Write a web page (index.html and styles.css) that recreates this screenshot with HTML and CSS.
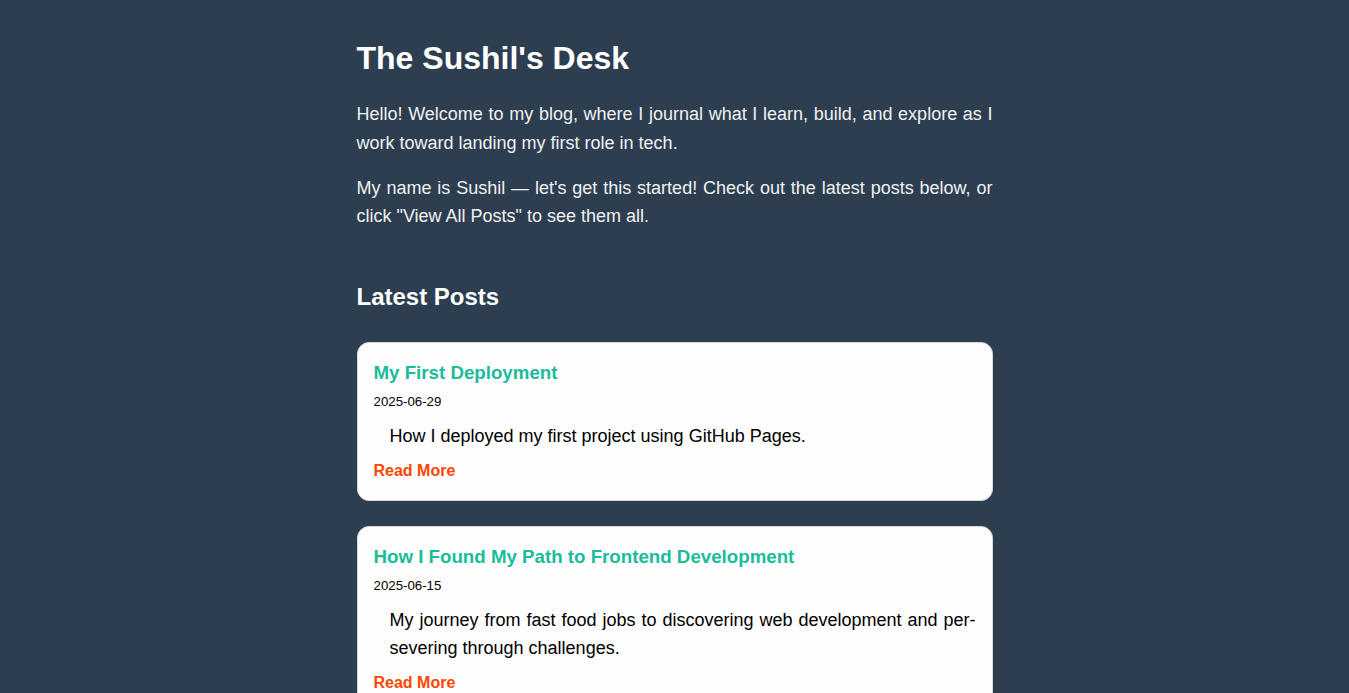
FILE: index.html
```html
<!DOCTYPE html>
<html lang="en">
<head>
<meta charset="utf-8">
<title>The Sushil's Desk</title>
<link rel="stylesheet" href="styles.css">
</head>
<body>
<main class="container">
  <section class="intro">
    <h1 class="site-title">The Sushil's Desk</h1>
    <p class="intro-text">Hello! Welcome to my blog, where I journal what I learn, build, and explore as I work toward landing my first role in tech.</p>
    <p class="intro-text last">My name is Sushil — let's get this started! Check out the latest posts below, or click "View All Posts" to see them all.</p>
  </section>
  <section class="posts">
    <h2 class="section-title">Latest Posts</h2>
    <article class="card">
      <h3 class="card-title">My First Deployment</h3>
      <div class="card-date">2025-06-29</div>
      <p class="card-desc">How I deployed my first project using GitHub Pages.</p>
      <a class="read-more" href="#">Read More</a>
    </article>
    <article class="card">
      <h3 class="card-title">How I Found My Path to Frontend Development</h3>
      <div class="card-date">2025-06-15</div>
      <p class="card-desc">My journey from fast food jobs to discovering web development and per&shy;severing through challenges.</p>
      <a class="read-more" href="#">Read More</a>
    </article>
  </section>
</main>
</body>
</html>
```
FILE: styles.css
```css
html, body {
  margin: 0;
  padding: 0;
  background: #2c3e50;
}
body {
  font-family: "Liberation Sans", Arial, sans-serif;
  color: #f1f1f1;
}
.container {
  width: 636px;
  margin: 0 auto;
  padding-top: 39px;
  padding-bottom: 40px;
}
.site-title {
  font-size: 32px;
  line-height: 38.4px;
  font-weight: bold;
  color: #ffffff;
  margin: 0 0 22.5px;
}
.intro-text {
  font-size: 18px;
  line-height: 28.8px;
  text-align: justify;
  margin: 0 0 16px;
}
.intro-text.last {
  margin-bottom: 0;
}
.section-title {
  font-size: 24px;
  line-height: 28.8px;
  font-weight: bold;
  color: #ffffff;
  margin: 51.5px 0 31px;
}
.card {
  background: #fdfdfd;
  border: 1px solid #d8d8d8;
  border-radius: 12px;
  padding: 17px 16px 17px;
  margin-bottom: 25px;
  color: #000;
}
.card-title {
  font-size: 18.72px;
  line-height: 26px;
  font-weight: bold;
  color: #1abc9c;
  margin: 0 0 5px;
}
.card-date {
  font-size: 13.28px;
  line-height: 22.4px;
  color: #000;
  margin-bottom: 8px;
}
.card-desc {
  font-size: 18px;
  line-height: 28.8px;
  text-align: justify;
  padding-left: 16px;
  margin: 0 0 7px;
  color: #000;
}
.read-more {
  display: block;
  font-size: 16px;
  line-height: 25.6px;
  font-weight: bold;
  color: #ff4500;
  text-decoration: none;
}
```
